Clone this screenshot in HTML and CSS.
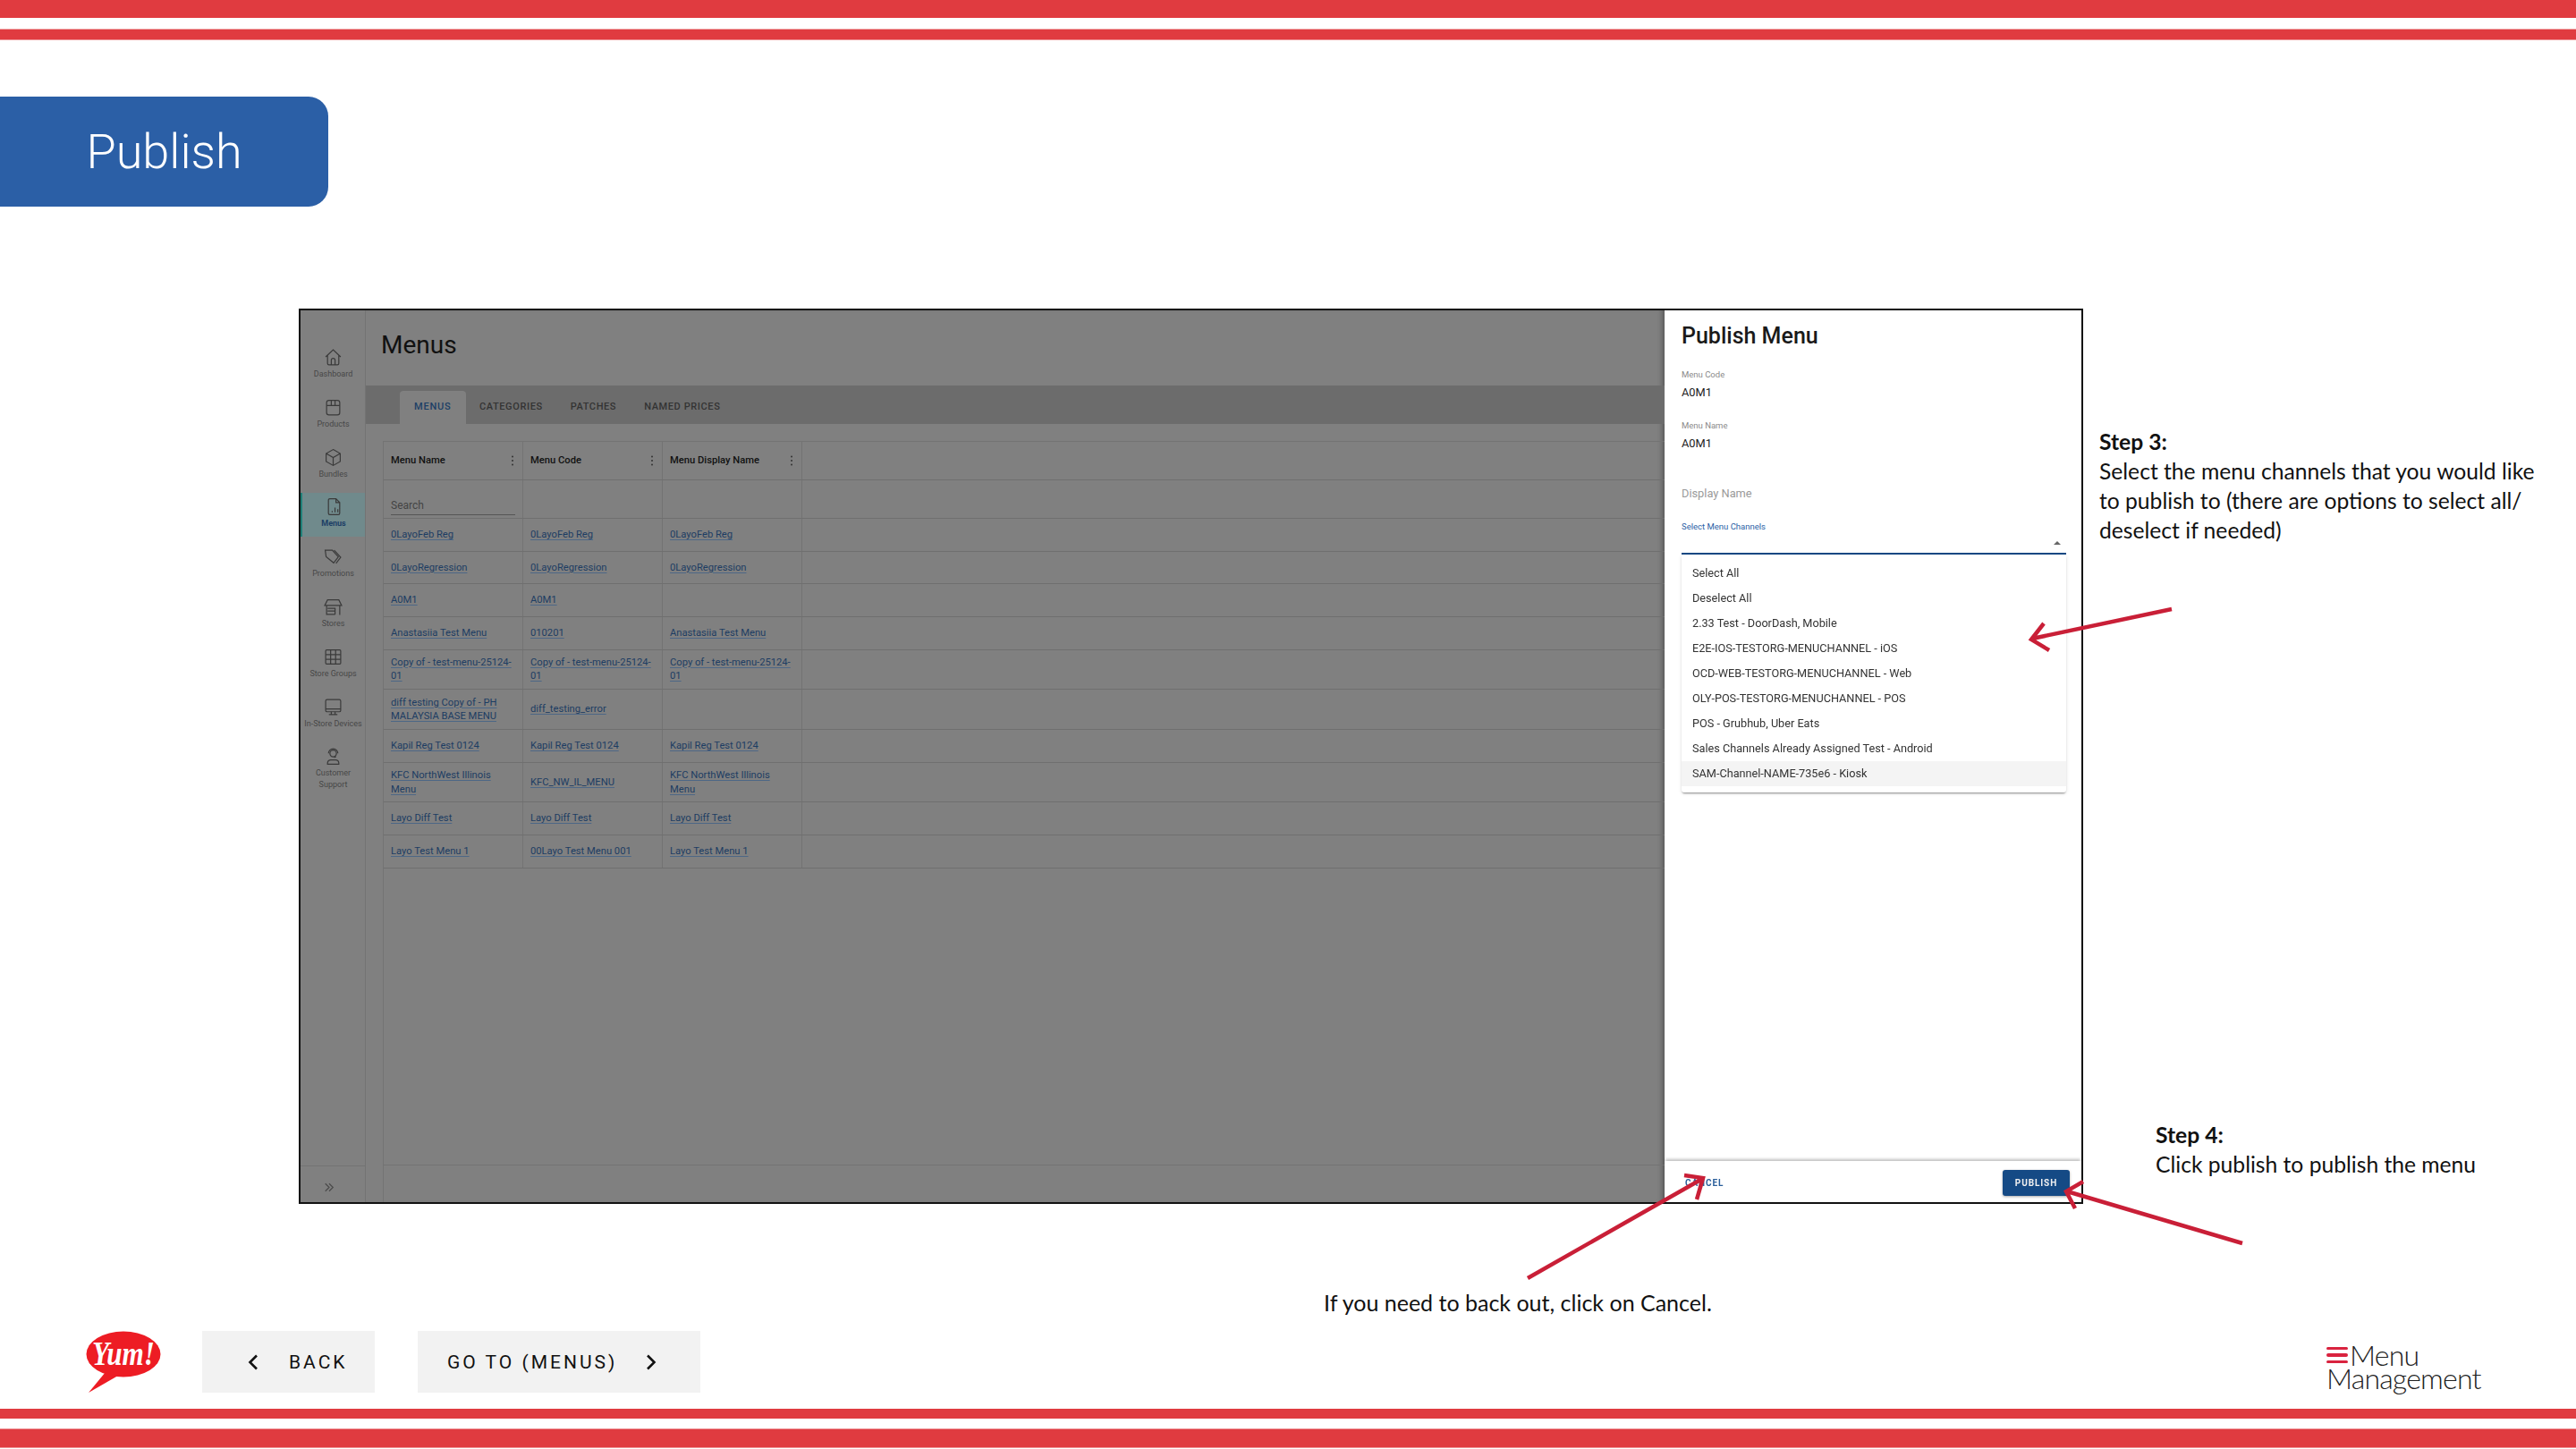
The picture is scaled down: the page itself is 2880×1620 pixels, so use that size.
FILE: index.html
```html
<!DOCTYPE html>
<html lang="en">
<head>
<meta charset="utf-8">
<title>Publish</title>
<link rel="stylesheet" href="styles.css">
</head>
<body>
<div class="slide">
  <div class="stripes-top"><div class="s-a"></div><div class="s-b"></div></div>
  <div class="title-tab"><span>Publish</span></div>

  <div class="shot">
    <div class="app">
      <nav class="side">
        <div class="side-items">
          <div class="nav"><svg class="ico" viewBox="0 0 20 20"><path d="M2 9.500 10 2l8 7.500M4 8v8.500A1.500 1.500 0 0 0 5.500 18h9a1.500 1.500 0 0 0 1.500-1.500V8M8 18v-5a2 2 0 0 1 4 0v5"/></svg><span>Dashboard</span></div>
          <div class="nav"><svg class="ico" viewBox="0 0 20 20"><rect x="3" y="2.500" width="14" height="15.500" rx="2.500"/><path d="M3 8h14M8 2.500V8M12 2.500V8"/></svg><span>Products</span></div>
          <div class="nav"><svg class="ico" viewBox="0 0 20 20"><path d="M10 1.500l7.500 4.200v8.600L10 18.500l-7.500-4.200V5.700zM2.500 5.700 10 10l7.500-4.300M10 10v8.500"/></svg><span>Bundles</span></div>
          <div class="nav active"><svg class="ico" viewBox="0 0 20 20"><path d="M5.500 1.500H12l4 4v11.500a1.500 1.500 0 0 1-1.500 1.500h-9A1.500 1.500 0 0 1 4 17V3a1.500 1.500 0 0 1 1.500-1.500zM12 1.500v4h4M8 16v-1.500M11 16v-5M14 16v-3.500"/></svg><span>Menus</span></div>
          <div class="nav"><svg class="ico" viewBox="0 0 20 20"><path d="M1.500 3h7.500l6.500 7-5 6.500-8-6.500zM11 3l7 7.500-5 6.500"/></svg><span>Promotions</span></div>
          <div class="nav"><svg class="ico" viewBox="0 0 20 20"><path d="M4 2.500h12l3 6H1zM3 8.500V18.500M17 8.500V18.500M3 18h9M4 11.500h8V18M4 14.500h8"/></svg><span>Stores</span></div>
          <div class="nav"><svg class="ico" viewBox="0 0 20 20"><rect x="2" y="2.500" width="16" height="15" rx="1"/><path d="M2 7.500h16M2 12.500h16M7.300 2.500v15M12.600 2.500v15"/></svg><span>Store Groups</span></div>
          <div class="nav"><svg class="ico" viewBox="0 0 20 20"><rect x="2" y="2" width="16" height="13" rx="1.500"/><path d="M2 12h16M8 15v3M12 15v3M5.500 18h9"/></svg><span>In-Store Devices</span></div>
          <div class="nav"><svg class="ico" viewBox="0 0 20 20"><circle cx="10" cy="7" r="3.500"/><path d="M5 7a5 5 0 0 1 10 0M4 18.500V17a3.500 3.500 0 0 1 3.500-3h5a3.500 3.500 0 0 1 3.500 3v1.500zM13 10.500 11 11.500"/></svg><span>Customer<br>Support</span></div>
        </div>
        <div class="side-foot"><svg class="dbl" viewBox="0 0 14 12"><path d="M2 1l5 5-5 5M7 1l5 5-5 5"/></svg></div>
      </nav>

      <main class="main">
        <h1 class="page-title">Menus</h1>
        <div class="tabs">
          <span class="tab on">MENUS</span>
          <span class="tab">CATEGORIES</span>
          <span class="tab">PATCHES</span>
          <span class="tab">NAMED PRICES</span>
        </div>
        <div class="content">
          <div class="grid">
            <div class="row head">
              <div class="cell"><b>Menu Name</b><svg class="kebab" viewBox="0 0 4 12"><circle cx="2" cy="1.500" r="1"/><circle cx="2" cy="6" r="1"/><circle cx="2" cy="10.500" r="1"/></svg></div>
              <div class="cell"><b>Menu Code</b><svg class="kebab" viewBox="0 0 4 12"><circle cx="2" cy="1.500" r="1"/><circle cx="2" cy="6" r="1"/><circle cx="2" cy="10.500" r="1"/></svg></div>
              <div class="cell"><b>Menu Display Name</b><svg class="kebab" viewBox="0 0 4 12"><circle cx="2" cy="1.500" r="1"/><circle cx="2" cy="6" r="1"/><circle cx="2" cy="10.500" r="1"/></svg></div>
            </div>
            <div class="row filter">
              <div class="cell"><div class="search">Search</div></div>
              <div class="cell"></div>
              <div class="cell"></div>
            </div>
            <div class="row"><div class="cell"><a>0LayoFeb Reg</a></div><div class="cell"><a>0LayoFeb Reg</a></div><div class="cell"><a>0LayoFeb Reg</a></div></div>
            <div class="row"><div class="cell"><a>0LayoRegression</a></div><div class="cell"><a>0LayoRegression</a></div><div class="cell"><a>0LayoRegression</a></div></div>
            <div class="row"><div class="cell"><a>A0M1</a></div><div class="cell"><a>A0M1</a></div><div class="cell"></div></div>
            <div class="row"><div class="cell"><a>Anastasiia Test Menu</a></div><div class="cell"><a>010201</a></div><div class="cell"><a>Anastasiia Test Menu</a></div></div>
            <div class="row tall"><div class="cell"><a>Copy of - test-menu-25124-<br>01</a></div><div class="cell"><a>Copy of - test-menu-25124-<br>01</a></div><div class="cell"><a>Copy of - test-menu-25124-<br>01</a></div></div>
            <div class="row taller"><div class="cell"><a>diff testing Copy of - PH<br>MALAYSIA BASE MENU</a></div><div class="cell"><a>diff_testing_error</a></div><div class="cell"></div></div>
            <div class="row"><div class="cell"><a>Kapil Reg Test 0124</a></div><div class="cell"><a>Kapil Reg Test 0124</a></div><div class="cell"><a>Kapil Reg Test 0124</a></div></div>
            <div class="row tall"><div class="cell"><a>KFC NorthWest Illinois<br>Menu</a></div><div class="cell"><a>KFC_NW_IL_MENU</a></div><div class="cell"><a>KFC NorthWest Illinois<br>Menu</a></div></div>
            <div class="row"><div class="cell"><a>Layo Diff Test</a></div><div class="cell"><a>Layo Diff Test</a></div><div class="cell"><a>Layo Diff Test</a></div></div>
            <div class="row"><div class="cell"><a>Layo Test Menu 1</a></div><div class="cell"><a>00Layo Test Menu 001</a></div><div class="cell"><a>Layo Test Menu 1</a></div></div>
            <div class="grid-foot"></div>
          </div>
        </div>
      </main>

      <aside class="panel">
        <div class="panel-body">
          <h2 class="panel-title">Publish Menu</h2>
          <div class="lbl first">Menu Code</div>
          <div class="val">A0M1</div>
          <div class="lbl second">Menu Name</div>
          <div class="val">A0M1</div>
          <div class="ph">Display Name</div>
          <div class="lbl-on">Select Menu Channels</div>
          <div class="select"><svg class="caret" viewBox="0 0 8 4"><path d="M0 4l4-4 4 4z"/></svg></div>
          <ul class="menu">
            <li>Select All</li>
            <li>Deselect All</li>
            <li>2.33 Test - DoorDash, Mobile</li>
            <li>E2E-IOS-TESTORG-MENUCHANNEL - iOS</li>
            <li>OCD-WEB-TESTORG-MENUCHANNEL - Web</li>
            <li>OLY-POS-TESTORG-MENUCHANNEL - POS</li>
            <li>POS - Grubhub, Uber Eats</li>
            <li>Sales Channels Already Assigned Test - Android</li>
            <li class="hover">SAM-Channel-NAME-735e6 - Kiosk</li>
          </ul>
        </div>
        <div class="panel-foot">
          <span class="cancel">CANCEL</span>
          <span class="publish">PUBLISH</span>
        </div>
      </aside>
    </div>
  </div>

  <div class="foot">
    <svg class="yum" viewBox="0 0 84 70">
      <ellipse cx="42" cy="26" rx="41.500" ry="25.500" fill="#ed1c24"/>
      <path d="M22 46 3 69 36 50z" fill="#ed1c24"/>
      <text class="yum-text" x="7" y="38" textLength="70" lengthAdjust="spacingAndGlyphs">Yum!</text>
    </svg>
    <div class="btn back"><svg class="chev" viewBox="0 0 12 18"><path d="M10 1.500 2.500 9l7.500 7.500"/></svg><span>BACK</span></div>
    <div class="btn next"><span>GO TO (MENUS)</span><svg class="chev" viewBox="0 0 12 18"><path d="M2 1.500 9.500 9 2 16.500"/></svg></div>
    <div class="mm">
      <div class="mm-top">
        <div class="mm-bars"><i></i><i></i><i></i></div>
        <span>Menu</span>
      </div>
      <div class="mm-bottom">Management</div>
    </div>
  </div>

  <div class="stripes-bottom"><div class="s-c"></div><div class="s-d"></div></div>

  <div class="note step3"><b>Step 3:</b><br>Select the menu channels that you would like<br>to publish to (there are options to select all/<br>deselect if needed)</div>
  <div class="note step4"><b>Step 4:</b><br>Click publish to publish the menu</div>
  <div class="note backout">If you need to back out, click on Cancel.</div>

  <svg class="arrows" viewBox="0 0 2880 1620">
    <path d="M2428 681 2272 714M2285 697 2271 715 2291 727"/>
    <path d="M1708 1429 1903 1318M1883 1314 1904 1317 1897 1341"/>
    <path d="M2507 1390 2311 1332M2329 1321 2310 1332 2320 1351"/>
  </svg>
</div>
</body>
</html>
```
FILE: styles.css
```css
* { box-sizing: border-box; }
html, body { margin: 0; padding: 0; background: #fff; }
body { font-family: Roboto, "Liberation Sans", sans-serif; }

.slide {
  position: relative;
  width: 2880px;
  height: 1620px;
  overflow: hidden;
  display: flex;
  flex-direction: column;
}

/* stripes */
.s-a { height: 20px; background: #e03b40; }
.s-b { height: 11px; margin-top: 13px; background: #e03b40; box-shadow: 0 -1px #f2b0b2, 0 1px #ee9497; }
.stripes-top { height: 44px; flex: none; }
.s-c { height: 11px; background: #e03b40; }
.s-d { height: 20px; margin-top: 12px; background: #e03b40; box-shadow: 0 -1px #ee9497, 0 1px #ee9497; }
.stripes-bottom { margin-top: 18px; flex: none; }

/* title */
.title-tab {
  flex: none;
  margin-top: 64px;
  width: 367px;
  height: 123px;
  background: #2b5fa6;
  border-radius: 0 22px 22px 0;
  color: #fff;
  font-weight: 300;
  font-size: 54px;
  display: flex;
  align-items: center;
  justify-content: center;
}

/* screenshot */
.shot {
  flex: none;
  margin: 114px 0 0 334px;
  width: 1995px;
  height: 1001px;
  border: 2px solid #111;
  overflow: hidden;
}
.app {
  display: flex;
  height: 100%;
  background: #808080;
  filter: blur(.35px);
}

/* sidebar */
.side {
  flex: none;
  width: 73px;
  border-right: 1px solid #737373;
  display: flex;
  flex-direction: column;
  color: #474747;
}
.side-items {
  flex: 1;
  padding-top: 37px;
  display: flex;
  flex-direction: column;
  gap: 6.800px;
}
.nav {
  height: 49px;
  padding: 5px 0 0 1px;
  display: flex;
  flex-direction: column;
  align-items: center;
  font-size: 9px;
  line-height: 13px;
  text-align: center;
  white-space: nowrap;
}
.nav span { margin-top: 2px; }
.ico { width: 21px; height: 21px; flex: none; fill: none; stroke: #3a3a3a; stroke-width: 1.150; }
.nav.active {
  background: #708a8c;
  border-left: 2px solid #1f8078;
  padding-left: 0;
  color: #1c3f66;
  font-weight: 700;
}
.side-foot {
  height: 41px;
  border-top: 1px solid #737373;
  display: flex;
  align-items: center;
  justify-content: center;
  padding: 6px 8px 0 0;
}
.dbl { width: 12px; height: 11px; fill: none; stroke: #4a4a4a; stroke-width: 1.400; }

/* main */
.main {
  flex: 1;
  min-width: 0;
  display: flex;
  flex-direction: column;
  box-shadow: inset -6px 0 7px -5px rgba(0,0,0,.45);
}
.page-title {
  margin: 0;
  height: 84px;
  padding: 22px 0 0 17px;
  font-size: 28px;
  line-height: 34px;
  font-weight: 400;
  color: #111;
}
.tabs {
  flex: none;
  height: 43px;
  padding: 6px 0 0 38px;
  background: #6c6c6c;
  display: flex;
  font-size: 11px;
  font-weight: 500;
  letter-spacing: .6px;
  color: #333;
}
.tab { padding: 0 15.500px; height: 37px; line-height: 36px; }
.tab.on { background: #808080; color: #1c3f66; border-radius: 4px 4px 0 0; padding: 0 16px; letter-spacing: .8px; }
.content { flex: 1; padding: 19px 0 0 19px; display: flex; min-height: 0; }
.grid {
  flex: 1;
  border-left: 1px solid #737373;
  border-top: 1px solid #737373;
  display: flex;
  flex-direction: column;
}
.row {
  flex: none;
  display: grid;
  grid-template-columns: 156px 156px 156px;
  height: 36.700px;
  border-bottom: 1px solid #6f6f6f;
  font-size: 11.200px;
  line-height: 15.600px;
  color: #1d3d63;
}
.row.tall { height: 44.200px; }
.row.taller { height: 45.500px; }
.row.head { height: 43px; color: #111; }
.row.filter { height: 43px; }
.cell {
  border-right: 1px solid #737373;
  padding: 0 8px;
  display: flex;
  align-items: center;
  justify-content: space-between;
}
.cell a { text-decoration: underline; text-underline-offset: 2px; text-decoration-thickness: 1px; text-decoration-color: #4d6786; }
.cell b { font-weight: 500; }
.kebab { width: 4px; height: 12px; fill: #333; margin-right: 1px; }
.search {
  flex: 1;
  align-self: flex-end;
  margin-bottom: 3px;
  padding-bottom: 3px;
  font-size: 12px;
  line-height: 14px;
  color: #444;
  border-bottom: 1px solid #555;
}
.grid-foot { margin-top: auto; height: 42px; border-top: 1px solid #737373; }

/* right panel */
.panel {
  flex: none;
  width: 466px;
  background: #fff;
  display: flex;
  flex-direction: column;
}
.panel-body { flex: 1; padding: 0 17px 0 19px; min-height: 0; }
.panel-title { margin: 14px 0 0; font-size: 25px; line-height: 29px; font-weight: 500; color: #1a1a1a; }
.lbl { font-size: 9.500px; line-height: 12px; color: #8a8a8a; }
.lbl.first { margin-top: 23px; }
.lbl.second { margin-top: 23px; }
.val { margin-top: 6px; font-size: 12.800px; line-height: 16px; color: #222; }
.ph { margin-top: 39px; font-size: 12.800px; line-height: 18px; color: #9a9a9a; }
.lbl-on { margin-top: 22px; font-size: 9.500px; line-height: 12px; color: #2b5fa6; }
.select {
  height: 25px;
  border-bottom: 2px solid #154a85;
  display: flex;
  justify-content: flex-end;
  padding: 10px 6px 0 0;
}
.caret { width: 8px; height: 4px; fill: #666; }
.menu {
  list-style: none;
  margin: 0;
  padding: 7px 0;
  background: #fff;
  border-radius: 3px;
  box-shadow: 0 2px 2px -1px rgba(0,0,0,.4), 0 1px 4px rgba(0,0,0,.12);
  font-size: 12.700px;
  color: #333;
}
.menu li { height: 28px; line-height: 28px; padding-left: 12px; }
.menu li.hover { background: #f4f4f4; }
.panel-foot {
  flex: none;
  height: 46px;
  box-shadow: 0 -3px 3px -1px rgba(0,0,0,.25);
  display: flex;
  align-items: center;
  justify-content: space-between;
  padding: 2px 13px 0 23px;
  font-size: 10px;
  font-weight: 700;
  letter-spacing: .9px;
}
.cancel { color: #2b5f9b; }
.publish {
  width: 75px;
  height: 29px;
  line-height: 29px;
  text-align: center;
  background: #154a85;
  color: #f0f0f0;
  border-radius: 3px;
  box-shadow: 0 1px 3px rgba(0,0,0,.35);
}

/* footer */
.foot {
  flex: none;
  margin-top: 142px;
  height: 69px;
  padding: 0 106px 0 96px;
  display: flex;
  align-items: stretch;
}
.yum { width: 84px; height: 70px; flex: none; margin-right: 46px; overflow: visible; }
.yum-text { font-family: "Liberation Serif", serif; font-weight: 700; font-style: italic; font-size: 37px; fill: #fff; }
.btn {
  background: #f2f2f2;
  display: flex;
  align-items: center;
  font-size: 21px;
  letter-spacing: 3px;
  color: #111;
  flex: none;
}
.back { width: 193px; padding-left: 51px; gap: 34px; margin-right: 48px; }
.next { width: 316px; padding-left: 33px; gap: 32px; }
.chev { width: 12px; height: 18px; fill: none; stroke: #111; stroke-width: 2.600; flex: none; }
.mm {
  margin-left: auto;
  padding-top: 14px;
  font-family: Lato, sans-serif;
  font-weight: 300;
  font-size: 32px;
  line-height: 26px;
  letter-spacing: -.8px;
  color: #222;
  width: 173px;
  white-space: nowrap;
}
.mm-top { display: flex; gap: 2px; align-items: center; }
.mm-bars { width: 24px; display: flex; flex-direction: column; gap: 4px; }
.mm-bars i { display: block; height: 3.500px; background: #d9233f; border-radius: 2px; }

/* annotations on the free canvas */
.note {
  position: absolute;
  font-family: Lato, sans-serif;
  font-size: 24.650px;
  line-height: 33px;
  color: #111;
  white-space: nowrap;
}
.note b { font-weight: 700; }
.step3 { left: 2347px; top: 477px; }
.step4 { left: 2410px; top: 1252px; }
.backout { left: 1480px; top: 1440px; font-size: 25px; }
.arrows {
  position: absolute;
  left: 0;
  top: 0;
  width: 2880px;
  height: 1620px;
  fill: none;
  stroke: #c91f37;
  stroke-width: 4.500px;
  pointer-events: none;
}
```
